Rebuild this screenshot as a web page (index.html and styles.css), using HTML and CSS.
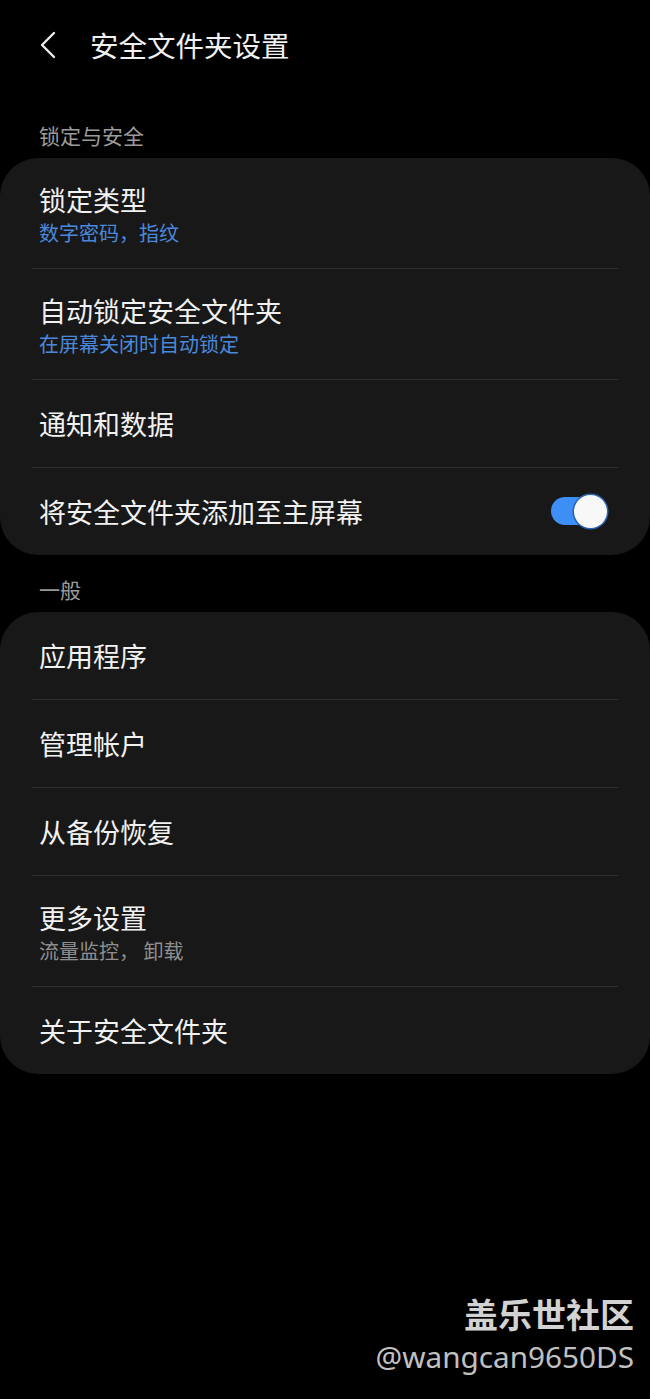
FILE: index.html
```html
<!DOCTYPE html>
<html lang="zh-CN">
<head>
<meta charset="utf-8">
<title>安全文件夹设置</title>
<link rel="stylesheet" href="styles.css">
</head>
<body>
<div class="screen">
  <header class="appbar">
    <svg class="back" width="18" height="28" viewBox="0 0 18 28" aria-hidden="true">
      <polyline points="15,2 3,14 15,26" fill="none" stroke="#ececec" stroke-width="2.4" stroke-linecap="round" stroke-linejoin="round"/>
    </svg>
    <h1 class="title">安全文件夹设置</h1>
  </header>

  <div class="section-label first">锁定与安全</div>
  <div class="card">
    <div class="row two">
      <div class="row-title">锁定类型</div>
      <div class="row-sub blue">数字密码，指纹</div>
    </div>
    <div class="row two">
      <div class="row-title">自动锁定安全文件夹</div>
      <div class="row-sub blue">在屏幕关闭时自动锁定</div>
    </div>
    <div class="row">
      <div class="row-title">通知和数据</div>
    </div>
    <div class="row switch-row">
      <div class="row-title">将安全文件夹添加至主屏幕</div>
      <div class="switch"><div class="knob"></div></div>
    </div>
  </div>

  <div class="section-label">一般</div>
  <div class="card">
    <div class="row"><div class="row-title">应用程序</div></div>
    <div class="row"><div class="row-title">管理帐户</div></div>
    <div class="row"><div class="row-title">从备份恢复</div></div>
    <div class="row two">
      <div class="row-title">更多设置</div>
      <div class="row-sub gray">流量监控， 卸载</div>
    </div>
    <div class="row"><div class="row-title">关于安全文件夹</div></div>
  </div>

  <div class="watermark">
    <div class="wm-brand">盖乐世社区</div>
    <div class="wm-user">@wangcan9650DS</div>
  </div>
</div>
</body>
</html>
```

FILE: styles.css
```css
* { box-sizing: border-box; }
html, body {
  margin: 0;
  padding: 0;
  background: #000;
}
body {
  font-family: "Noto Sans CJK SC", "Noto Sans", sans-serif;
  color: #f1f1f1;
  width: 650px;
  height: 1399px;
  overflow: hidden;
}
.screen {
  display: flex;
  flex-direction: column;
  height: 1399px;
}
.appbar {
  height: 90px;
  display: flex;
  align-items: center;
  padding-left: 39px;
}
.back { display: block; }
.title {
  margin: 0 0 0 33px;
  font-size: 28.5px;
  font-weight: 400;
  line-height: 36px;
  color: #f1f1f1;
}
.section-label {
  padding-left: 39px;
  font-size: 21px;
  line-height: 26px;
  color: #9c9c9c;
  margin-top: 21px;
  margin-bottom: 10px;
}
.section-label.first { margin-top: 32px; }
.card {
  background: #181818;
  border-radius: 38px;
}
.row {
  margin: 0 32px;
  padding: 29px 11px 28px 7px;
  display: flex;
  flex-direction: column;
}
.row + .row { border-top: 1px solid #303030; }
.row.two { padding-top: 27px; padding-bottom: 22px; }
.row-title {
  font-size: 27px;
  line-height: 30px;
  color: #f1f1f1;
}
.row-sub {
  font-size: 20px;
  line-height: 26px;
  margin-top: 5px;
}
.blue { color: #4b88dc; }
.gray { color: #8f8f8f; }
.switch-row {
  flex-direction: row;
  align-items: center;
  justify-content: space-between;
}
.switch {
  position: relative;
  width: 56px;
  height: 28px;
  border-radius: 14px;
  background: #3d8ef5;
  margin-top: -2px;
}
.knob {
  position: absolute;
  right: 0;
  top: -2.5px;
  width: 33px;
  height: 33px;
  border-radius: 50%;
  background: #f8f8f8;
  box-shadow: 0 0 0 1.5px #2a64b0;
}
.watermark {
  margin-top: auto;
  padding: 0 16px 22px 0;
  display: flex;
  flex-direction: column;
  align-items: flex-end;
}
.wm-brand {
  font-size: 34px;
  line-height: 42px;
  font-weight: 700;
  color: #d2d2d2;
}
.wm-user {
  font-family: "Noto Sans", "Open Sans", sans-serif;
  font-size: 29.7px;
  line-height: 40px;
  color: #c0c0c0;
  margin-top: 2px;
}
```
